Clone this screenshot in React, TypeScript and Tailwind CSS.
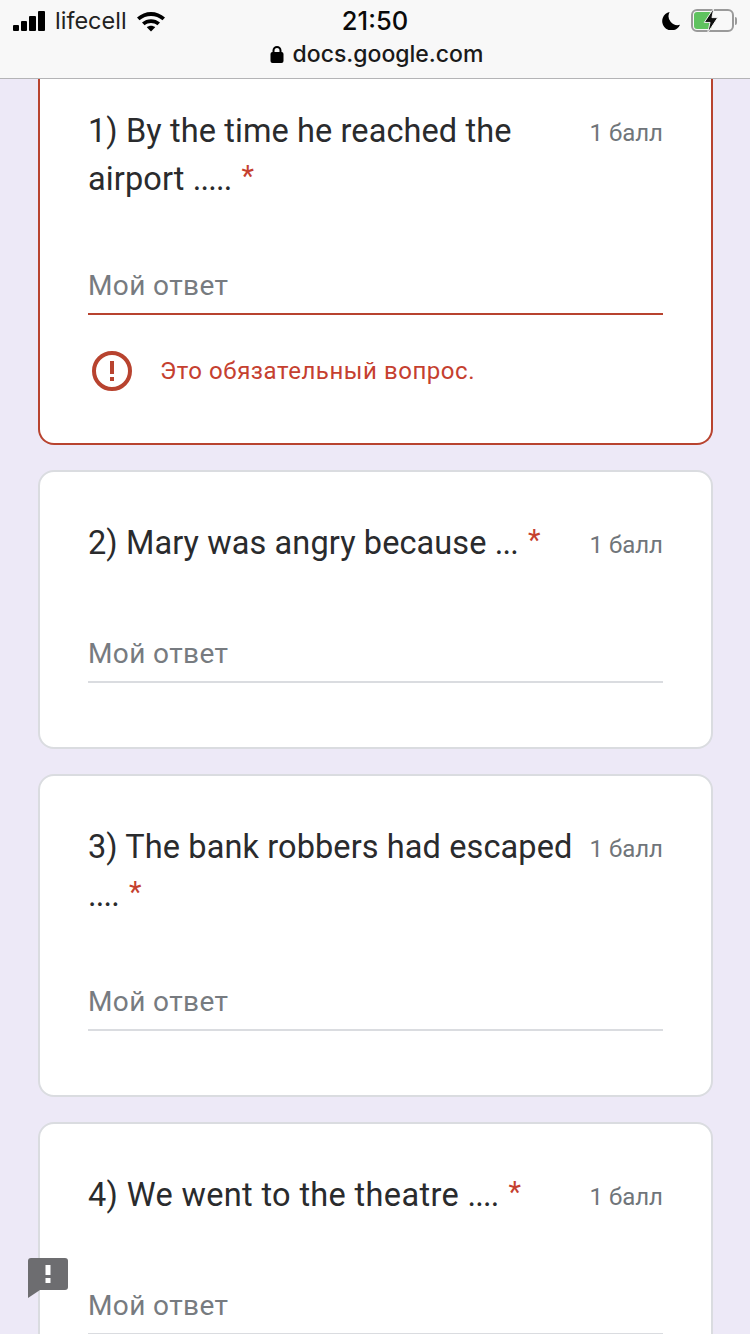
const sans = "font-['Roboto',sans-serif]";

const StatusBar = () => (
  <header className="h-[79px] shrink-0 bg-[#f8f8f8] border-b border-[#b4b4b6] font-['Inter',sans-serif] text-[#0a0a0a]">
    <div className="flex h-[41px] items-center justify-between pl-[13px] pr-[13px]">
      <div className="flex w-[200px] items-center">
        <div className="flex items-end gap-[2px]">
          <span className="h-[6px] w-[6px] rounded-[1px] bg-black" />
          <span className="h-[10px] w-[6px] rounded-[1px] bg-black" />
          <span className="h-[15px] w-[7px] rounded-[1px] bg-black" />
          <span className="h-[20px] w-[7px] rounded-[1px] bg-black" />
        </div>
        <span className="ml-[10px] text-[23.500px] leading-none text-[#222]">lifecell</span>
        <svg width="30" height="22" viewBox="0 0 30 22" className="ml-[9px]">
          <path d="M1 7.500C9 0 21 0 29 7.500l-2.500 2.800C20 4.600 10 4.600 3.500 10.300z" fill="#000" />
          <path d="M6 12.500c5-4.500 13-4.500 18 0l-2.600 2.800c-3.500-3-9.300-3-12.800 0z" fill="#000" />
          <path d="M10.800 17.300c2.400-2 6-2 8.400 0L15 21.500z" fill="#000" />
        </svg>
      </div>
      <span className="text-[25.500px] font-medium leading-none">21:50</span>
      <div className="flex w-[200px] items-center justify-end gap-[10px]">
        <svg width="19" height="19" viewBox="0 0 20 20">
          <path d="M8 1a9.500 9.500 0 0 0 11 13.500A9.800 9.800 0 1 1 8 1z" fill="#000" />
        </svg>
        <div className="relative flex items-center">
          <div className="h-[23px] w-[43px] rounded-[6px] border-2 border-[#9a9a9a] p-[1px]">
            <div className="h-full w-[18px] rounded-[3px] bg-[#5fc25f]" />
          </div>
          <span className="ml-[1px] h-[8px] w-[2px] rounded-r-sm bg-[#9a9a9a]" />
          <svg width="18" height="25" viewBox="0 0 16 26" className="absolute left-[11px] top-[-1px]">
            <path d="M11 0 1 15h6L4.500 26 15 10H9z" fill="#111" stroke="#f8f8f8" strokeWidth="1" />
          </svg>
        </div>
      </div>
    </div>
    <div className="flex items-center justify-center gap-[9px] pl-[3px] pt-[1px]">
      <svg width="14" height="18" viewBox="0 0 14 18">
        <path d="M3.500 8V5.500a3.500 3.500 0 0 1 7 0V8" fill="none" stroke="#000" strokeWidth="2" />
        <rect x="0.500" y="7" width="13" height="11" rx="2" fill="#000" />
      </svg>
      <span className="text-[23px] font-medium leading-[24px] text-[#1a1a1a]">docs.google.com</span>
    </div>
  </header>
);

type QuestionProps = {
  title: string;
  tail?: string;
  dots: string;
  heightClass: string;
  titleClass?: string;
  invalid?: boolean;
};

const Question = ({ title, tail, dots, heightClass, titleClass = "tracking-[0.1px]", invalid }: QuestionProps) => (
  <section
    className={`ml-[38px] w-[675px] px-[48px] bg-white ${heightClass} ${
      invalid
        ? "rounded-b-[16px] border-2 border-t-0 border-[#b8432f] pt-[28px]"
        : "rounded-[16px] border-2 border-[#dadce0] pt-[47px]"
    }`}
  >
    <div className="flex min-h-[52px] items-start justify-between">
      <h2 className={`${sans} ${titleClass} text-[32.500px] leading-[48px] text-[#2a2b2d]`}>
        {title}
        {tail !== undefined && <br />}
        {tail}
        <span className="tracking-[-0.8px]">{dots}</span>
        <span className="ml-[10px] align-[4px] text-[29px] leading-none text-[#c5402f]">*</span>
      </h2>
      <span className={`${sans} mt-[12px] whitespace-nowrap text-[24px] leading-[28px] text-[#70757a]`}>1 балл</span>
    </div>
    <div className={`mt-[69px] h-[43px] border-b-2 ${invalid ? "border-[#b8432f]" : "border-[#dadce0]"}`}>
      <span className={`${sans} block text-[28px] leading-[28px] tracking-[0.4px] text-[#777b80]`}>Мой ответ</span>
    </div>
    {invalid && (
      <div className="mt-[36px] flex items-center gap-[28px] pl-[4px]">
        <svg width="40" height="40" viewBox="0 0 40 40">
          <circle cx="20" cy="20" r="18" fill="none" stroke="#b8432f" strokeWidth="4" />
          <rect x="18" y="10" width="4" height="13" fill="#b8432f" />
          <rect x="18" y="26" width="4" height="4" fill="#b8432f" />
        </svg>
        <span className={`${sans} text-[24px] tracking-[0.55px] text-[#c5402f]`}>Это обязательный вопрос.</span>
      </div>
    )}
  </section>
);

export default function App() {
  return (
    <div className="relative flex h-[1334px] w-[750px] flex-col overflow-hidden bg-[#ede9f7]">
      <StatusBar />
      <main className="flex flex-col gap-[25px]">
        <Question title="1) By the time he reached the" tail="airport " dots="....." heightClass="h-[366px]" invalid />
        <Question title="2) Mary was angry because " dots="..." heightClass="h-[279px]" />
        <Question title="3) The bank robbers had escaped" tail="" dots="...." heightClass="h-[323px]" />
        <Question title="4) We went to the theatre " dots="...." heightClass="h-[279px]" titleClass="tracking-[0.35px]" />
      </main>
      {/* report bubble over the last card */}
      <div className="absolute left-[28px] top-[1258px]">
        <div className="flex h-[32px] w-[40px] items-center justify-center rounded-[3px] rounded-bl-none bg-[#6d6d70]">
          <svg width="6" height="18" viewBox="0 0 6 18">
            <rect x="0.500" y="0" width="5" height="10" fill="#fff" />
            <rect x="0.500" y="13" width="5" height="5" fill="#fff" />
          </svg>
        </div>
        <svg width="12" height="8" viewBox="0 0 12 8" className="block">
          <path d="M0 0h12L0 8z" fill="#6d6d70" />
        </svg>
      </div>
    </div>
  );
}
